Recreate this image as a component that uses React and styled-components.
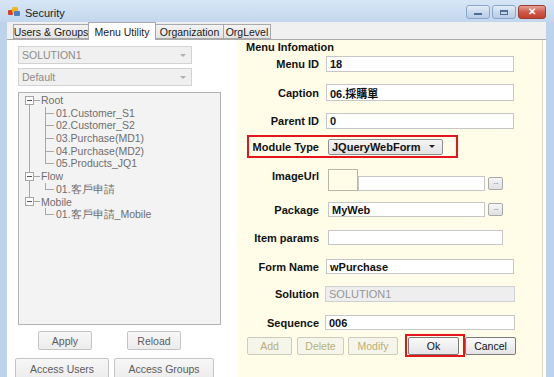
import React from "react";
import styled, { createGlobalStyle } from "styled-components";

const GlobalStyle = createGlobalStyle`
  html, body {
    margin: 0;
    padding: 0;
    background: #ffffff;
  }
  body {
    font-family: "Liberation Sans", Arial, sans-serif;
    font-size: 11px;
    color: #1a1a1a;
  }
`;

const Window = styled.div`
  width: 554px;
  height: 377px;
  overflow: hidden;
  display: flex;
  flex-direction: column;
  background: #bfd5ec;
`;

const TitleBar = styled.div`
  height: 22px;
  flex: none;
  display: flex;
  align-items: center;
  padding: 0 8px 0 8px;
  box-sizing: border-box;
  background: linear-gradient(#d7e6f6, #c2d7ee);
`;

const Title = styled.span`
  margin-left: 4px;
  padding-top: 3px;
  font-size: 11px;
  color: #1e1e1e;
`;

const WinButtons = styled.div`
  margin-left: auto;
  align-self: flex-start;
  margin-top: 5px;
  display: flex;
  gap: 2px;
`;

const WinButton = styled.div`
  width: ${(p) => (p.$close ? 28 : 24)}px;
  height: 14px;
  box-sizing: border-box;
  border: 1px solid ${(p) => (p.$close ? "#9a3b30" : "#8aa6c8")};
  border-radius: 3px;
  background: ${(p) =>
    p.$close
      ? "linear-gradient(#e7a294, #cf5a48 50%, #c2402e)"
      : "linear-gradient(#e6eef8, #c9d9ed 50%, #b8cde6)"};
  display: flex;
  align-items: center;
  justify-content: center;
  color: #fff;
  font-size: 10px;
  font-weight: bold;
  line-height: 1;
`;

const MinGlyph = styled.span`
  width: 8px;
  height: 2px;
  margin-top: 4px;
  background: #4f6c92;
`;

const MaxGlyph = styled.span`
  width: 8px;
  height: 5px;
  box-sizing: border-box;
  border: 1px solid #4f6c92;
  border-top-width: 2px;
`;

const Body = styled.div`
  flex: 1;
  display: flex;
  min-height: 0;
`;

const Edge = styled.div`
  width: ${(p) => p.$w}px;
  flex: none;
  background: #bcd3eb;
`;

const Client = styled.div`
  width: 539px;
  flex: none;
  display: flex;
  flex-direction: column;
  background: #f0f0f0;
`;

const TabStrip = styled.div`
  height: 17px;
  flex: none;
  display: flex;
  align-items: flex-end;
  padding-left: 6px;
`;

const Tab = styled.div`
  width: ${(p) => p.$w}px;
  height: ${(p) => (p.$active ? 18 : 15)}px;
  box-sizing: border-box;
  margin-bottom: ${(p) => (p.$active ? -1 : 0)}px;
  position: relative;
  z-index: ${(p) => (p.$active ? 1 : 0)};
  border: 1px solid #a9a9a9;
  border-bottom: ${(p) => (p.$active ? "none" : "1px solid #a9a9a9")};
  margin-right: -1px;
  background: ${(p) =>
    p.$active ? "#ffffff" : "linear-gradient(#f3f3f3, #e3e3e3)"};
  display: flex;
  align-items: center;
  justify-content: center;
  font-size: 10.5px;
  color: #202020;
  white-space: nowrap;
`;

const TabPage = styled.div`
  flex: 1;
  display: flex;
  border-top: 1px solid #a9a9a9;
  background: #ffffff;
  min-height: 0;
`;

const LeftPane = styled.div`
  width: 230px;
  flex: none;
  padding-left: 11px;
  box-sizing: border-box;
  display: flex;
  flex-direction: column;
`;

const Combo = styled.div`
  margin-top: ${(p) => p.$mt}px;
  width: 174px;
  height: 18px;
  flex: none;
  box-sizing: border-box;
  border: 1px solid #d2d2d2;
  background: #f0f0f0;
  display: flex;
  align-items: center;
  padding: 0 5px 0 3px;
  color: #8c8c8c;
  font-size: 10.5px;
`;

const ComboArrow = styled.span`
  margin-left: auto;
  width: 0;
  height: 0;
  border-left: 3px solid transparent;
  border-right: 3px solid transparent;
  border-top: 3px solid ${(p) => p.$color || "#b0b0b0"};
`;

const TreeBox = styled.div`
  margin-top: 6px;
  width: 203px;
  height: 233px;
  flex: none;
  box-sizing: border-box;
  border: 1px solid #b2b2b2;
  background: #f3f3f3;
  padding: 1px 0 0 6px;
  color: #6e6e6e;
  font-size: 10.5px;
`;

const TopList = styled.ul`
  list-style: none;
  margin: 0;
  padding: 0;
`;

const TopItem = styled.li`
  position: relative;
  &:not(:last-child)::after {
    content: "";
    position: absolute;
    left: 4px;
    top: 11px;
    bottom: -2px;
    border-left: 1px solid #a8a8a8;
  }
`;

const NodeRow = styled.div`
  height: 12.67px;
  display: flex;
  align-items: center;
  white-space: nowrap;
`;

const Expander = styled.span`
  width: 9px;
  height: 9px;
  box-sizing: border-box;
  border: 1px solid #a4a4a4;
  background: #fbfbfb;
  display: flex;
  align-items: center;
  justify-content: center;
  &::after {
    content: "";
    width: 5px;
    height: 1px;
    background: #555;
  }
`;

const Dash = styled.span`
  width: 6px;
  border-top: 1px solid #a8a8a8;
`;

const NodeText = styled.span`
  margin-left: 1px;
`;

const ChildList = styled.ul`
  list-style: none;
  margin: 0 0 0 20px;
  padding: 0;
`;

const ChildItem = styled.li`
  position: relative;
  padding-left: 11px;
  height: 12.67px;
  line-height: 12.67px;
  white-space: nowrap;
  &::before {
    content: "";
    position: absolute;
    left: 0;
    top: 0;
    width: 8px;
    height: 6px;
    border-left: 1px solid #a8a8a8;
    border-bottom: 1px solid #a8a8a8;
  }
  &:not(:last-child)::after {
    content: "";
    position: absolute;
    left: 0;
    top: 6px;
    bottom: 0;
    border-left: 1px solid #a8a8a8;
  }
`;

const ButtonRow = styled.div`
  margin-top: ${(p) => p.$mt}px;
  margin-left: ${(p) => p.$ml || 0}px;
  display: flex;
  gap: ${(p) => p.$gap}px;
  flex: none;
`;

const GrayButton = styled.div`
  width: ${(p) => p.$w}px;
  height: ${(p) => p.$h}px;
  margin-left: ${(p) => p.$ml || 0}px;
  box-sizing: border-box;
  border: 1px solid #c4c4c4;
  border-radius: 2px;
  background: linear-gradient(#f7f7f7, #ececec);
  display: flex;
  align-items: center;
  justify-content: center;
  color: #5c5c5c;
  font-size: 10.5px;
`;

const RightPane = styled.div`
  flex: 1;
  margin-right: 3px;
  background: #fffde8;
  border-right: 1px solid #d9d8c6;
  padding-top: 1px;
  display: flex;
  flex-direction: column;
`;

const GroupTitle = styled.div`
  margin-left: 9px;
  height: 12px;
  line-height: 12px;
  font-weight: bold;
  font-size: 11px;
  color: #111;
`;

const FieldRow = styled.div`
  margin-top: ${(p) => p.$mt}px;
  margin-left: ${(p) => (p.$highlight ? 10 : 0)}px;
  width: ${(p) => (p.$highlight ? "211px" : "auto")};
  height: ${(p) => p.$h}px;
  flex: none;
  box-sizing: border-box;
  border: ${(p) => (p.$highlight ? "2px solid #e3161b" : "none")};
  display: flex;
  align-items: ${(p) => (p.$top ? "flex-start" : "center")};
`;

const Label = styled.div`
  width: ${(p) => p.$w || 82}px;
  flex: none;
  text-align: right;
  font-weight: bold;
  font-size: 11px;
  color: #111;
  margin-top: ${(p) => p.$mt || 0}px;
  white-space: nowrap;
`;

const TextBox = styled.div`
  width: ${(p) => p.$w}px;
  height: ${(p) => p.$h}px;
  margin-left: ${(p) => (p.$ml === undefined ? 7 : p.$ml)}px;
  flex: none;
  box-sizing: border-box;
  border: 1px solid ${(p) => (p.$disabled ? "#cfcfcf" : "#c6c6c6")};
  background: ${(p) => (p.$disabled ? "#eeeeee" : "#ffffff")};
  align-self: ${(p) => (p.$bottom ? "flex-end" : "auto")};
  display: flex;
  align-items: center;
  padding-left: 3px;
  font-weight: ${(p) => (p.$disabled ? "normal" : "bold")};
  color: ${(p) => (p.$disabled ? "#969696" : "#111")};
  font-size: 11px;
  white-space: nowrap;
  font-family: "Liberation Sans", "Noto Sans CJK TC", sans-serif;
`;

const ModuleCombo = styled.div`
  margin-left: 9px;
  width: 115px;
  height: 16px;
  box-sizing: border-box;
  border: 1px solid #8f8f8f;
  border-radius: 2px;
  background: linear-gradient(#f4f4f4, #e2e2e2);
  display: flex;
  align-items: center;
  padding: 0 7px 0 3px;
  font-weight: bold;
  font-size: 11px;
  color: #111;
`;

const ImageBox = styled.div`
  margin-left: 9px;
  width: 30px;
  height: 22px;
  flex: none;
  box-sizing: border-box;
  border: 1px solid #b9b7a8;
  background: #fffde8;
`;

const DotsButton = styled.div`
  margin-left: 3px;
  width: 15px;
  height: 13px;
  flex: none;
  box-sizing: border-box;
  border: 1px solid #a9a9a9;
  border-radius: 2px;
  background: linear-gradient(#f6f6f6, #e0e0e0);
  align-self: ${(p) => (p.$bottom ? "flex-end" : "auto")};
  margin-bottom: ${(p) => (p.$bottom ? 1 : 0)}px;
  display: flex;
  align-items: center;
  justify-content: center;
  font-size: 8px;
  color: #777;
  line-height: 1;
  letter-spacing: -1px;
`;

const ActionRow = styled.div`
  margin-top: 4px;
  margin-left: 10px;
  height: 23px;
  display: flex;
  align-items: center;
`;

const ActionButton = styled.div`
  width: ${(p) => p.$w}px;
  height: 18px;
  margin-left: ${(p) => p.$ml || 0}px;
  flex: none;
  box-sizing: border-box;
  border: 1px solid ${(p) => (p.$enabled ? "#7a7a7a" : "#cdccbc")};
  border-radius: 2px;
  background: ${(p) =>
    p.$enabled ? "linear-gradient(#fbfbfb, #e4e4e4)" : "#f6f5ea"};
  display: flex;
  align-items: center;
  justify-content: center;
  color: ${(p) => (p.$enabled ? "#111" : "#b7b07a")};
  font-size: 10.5px;
`;

const RedFrame = styled.div`
  margin-left: 7px;
  width: 60px;
  height: 23px;
  box-sizing: border-box;
  border: 2px solid #e3161b;
  display: flex;
  align-items: center;
  padding-left: 1px;
`;

const AppIcon = () => (
  <svg width="13" height="11" viewBox="0 0 13 11">
    <rect x="0" y="4" width="5" height="5" rx="1" fill="#d9402b" />
    <rect x="4" y="1" width="6" height="6" rx="1.5" fill="#f1b61e" />
    <rect x="6" y="5" width="6" height="5" rx="1" fill="#4b7fc4" />
  </svg>
);

const tree = [
  {
    name: "Root",
    children: [
      "01.Customer_S1",
      "02.Customer_S2",
      "03.Purchase(MD1)",
      "04.Purchase(MD2)",
      "05.Products_JQ1",
    ],
  },
  { name: "Flow", children: ["01.客戶申請"] },
  { name: "Mobile", children: ["01.客戶申請_Mobile"] },
];

const tabs = [
  { label: "Users & Groups", w: 76 },
  { label: "Menu Utility", w: 68, active: true },
  { label: "Organization", w: 69 },
  { label: "OrgLevel", w: 48 },
];

export default function App() {
  return (
    <>
      <GlobalStyle />
      <Window>
        <TitleBar>
          <AppIcon />
          <Title>Security</Title>
          <WinButtons>
            <WinButton>
              <MinGlyph />
            </WinButton>
            <WinButton>
              <MaxGlyph />
            </WinButton>
            <WinButton $close>✕</WinButton>
          </WinButtons>
        </TitleBar>
        <Body>
          <Edge $w={7} />
          <Client>
            <TabStrip>
              {tabs.map((t) => (
                <Tab key={t.label} $w={t.w} $active={t.active}>
                  {t.label}
                </Tab>
              ))}
            </TabStrip>
            <TabPage>
              <LeftPane>
                <Combo $mt={6}>
                  SOLUTION1
                  <ComboArrow />
                </Combo>
                <Combo $mt={4}>
                  Default
                  <ComboArrow />
                </Combo>
                <TreeBox>
                  <TopList>
                    {tree.map((node) => (
                      <TopItem key={node.name}>
                        <NodeRow>
                          <Expander />
                          <Dash />
                          <NodeText>{node.name}</NodeText>
                        </NodeRow>
                        <ChildList>
                          {node.children.map((c) => (
                            <ChildItem key={c}>{c}</ChildItem>
                          ))}
                        </ChildList>
                      </TopItem>
                    ))}
                  </TopList>
                </TreeBox>
                <ButtonRow $mt={6} $ml={20} $gap={35}>
                  <GrayButton $w={54} $h={19}>Apply</GrayButton>
                  <GrayButton $w={54} $h={19}>Reload</GrayButton>
                </ButtonRow>
                <ButtonRow $mt={8} $ml={-3} $gap={5}>
                  <GrayButton $w={94} $h={21}>Access Users</GrayButton>
                  <GrayButton $w={100} $h={21}>Access Groups</GrayButton>
                </ButtonRow>
              </LeftPane>

              <RightPane>
                <GroupTitle>Menu Infomation</GroupTitle>
                <FieldRow $mt={3} $h={16}>
                  <Label>Menu ID</Label>
                  <TextBox $w={188} $h={16}>18</TextBox>
                </FieldRow>
                <FieldRow $mt={12} $h={17}>
                  <Label>Caption</Label>
                  <TextBox $w={188} $h={17}>06.採購單</TextBox>
                </FieldRow>
                <FieldRow $mt={12} $h={16}>
                  <Label>Parent ID</Label>
                  <TextBox $w={188} $h={16}>0</TextBox>
                </FieldRow>
                <FieldRow $mt={6} $h={23} $highlight>
                  <Label $w={70}>Module Type</Label>
                  <ModuleCombo>
                    JQueryWebForm
                    <ComboArrow $color="#222" />
                  </ModuleCombo>
                </FieldRow>
                <FieldRow $mt={11} $h={22} $top>
                  <Label $mt={1}>ImageUrl</Label>
                  <ImageBox />
                  <TextBox $w={127} $h={15} $ml={0} $bottom />
                  <DotsButton $bottom>···</DotsButton>
                </FieldRow>
                <FieldRow $mt={11} $h={15}>
                  <Label>Package</Label>
                  <TextBox $w={157} $h={15} $ml={9}>MyWeb</TextBox>
                  <DotsButton>···</DotsButton>
                </FieldRow>
                <FieldRow $mt={13} $h={15}>
                  <Label>Item params</Label>
                  <TextBox $w={175} $h={15} $ml={9} />
                </FieldRow>
                <FieldRow $mt={14} $h={15}>
                  <Label>Form Name</Label>
                  <TextBox $w={188} $h={15}>wPurchase</TextBox>
                </FieldRow>
                <FieldRow $mt={12} $h={16}>
                  <Label>Solution</Label>
                  <TextBox $w={190} $h={16} $ml={6} $disabled>
                    SOLUTION1
                  </TextBox>
                </FieldRow>
                <FieldRow $mt={13} $h={15}>
                  <Label>Sequence</Label>
                  <TextBox $w={190} $h={15} $ml={6}>006</TextBox>
                </FieldRow>
                <ActionRow>
                  <ActionButton $w={45}>Add</ActionButton>
                  <ActionButton $w={47} $ml={5}>Delete</ActionButton>
                  <ActionButton $w={50} $ml={4}>Modify</ActionButton>
                  <RedFrame>
                    <ActionButton $w={51} $enabled>Ok</ActionButton>
                  </RedFrame>
                  <ActionButton $w={51} $enabled>Cancel</ActionButton>
                </ActionRow>
              </RightPane>
            </TabPage>
          </Client>
          <Edge $w={8} />
        </Body>
      </Window>
    </>
  );
}
